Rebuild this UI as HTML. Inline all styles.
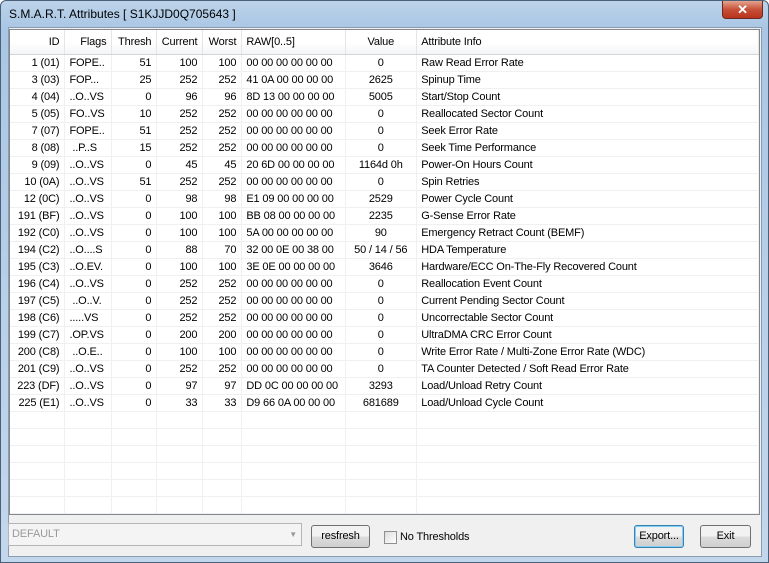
<!DOCTYPE html>
<html><head><meta charset="utf-8"><style>
*{margin:0;padding:0;box-sizing:border-box}
body{width:769px;height:563px;overflow:hidden;font-family:"Liberation Sans",sans-serif;font-size:11px;color:#000;background:#fff;letter-spacing:-0.15px}
#win{position:absolute;left:0;top:0;width:769px;height:563px;background:linear-gradient(180deg,#bcd3ea 0%,#a9c6e4 5%,#b7cfe8 50%,#c3d7ec 100%);border:1px solid #4a5f78;border-radius:6px 6px 0 0}
#title{position:absolute;left:8px;top:6px;font-size:12px;color:#000;font-family:"Liberation Sans",sans-serif;letter-spacing:0}
#close{position:absolute;left:721px;top:0;width:41px;height:18px;border:1px solid #6b2a20;border-top:none;border-radius:0 0 4px 4px;background:linear-gradient(#e5a48f,#c75038 50%,#b9331c);color:#fff;font-weight:bold;text-align:center;font-size:13px;line-height:17px}
#client{position:absolute;left:7px;top:26px;width:754px;height:530px;background:#f0f0f0;border:1px solid #8a9bb0}
#list{position:absolute;left:8px;top:28px;width:751px;height:486px;background:#fff;border:1px solid #828790;overflow:hidden}
table{border-collapse:collapse;table-layout:fixed;position:absolute;left:0;top:0}
td{height:17px;border-right:1px solid #f0f0f0;border-bottom:1px solid #f0f0f0;padding:0 5px 0 4px;white-space:nowrap;overflow:hidden;line-height:16px}
tr.h td{height:24px;background:linear-gradient(#fff 50%,#f4f5f7);border-right:1px solid #e5e5e5;border-bottom:1px solid #d5d5d5;padding-top:1px}
.r{text-align:right}.c{text-align:center}
.btn{position:absolute;height:23px;border:1px solid #707070;border-radius:3px;background:linear-gradient(#f2f2f2 50%,#dcdcdc 50%,#cfcfcf);text-align:center;line-height:21px}
</style></head><body>
<div id="win">
<div id="title">S.M.A.R.T. Attributes [ S1KJJD0Q705643 ]</div>
<div id="close">✕</div>
<div id="client"></div>
<div id="list"><table>
<colgroup><col style="width:55px"><col style="width:47px"><col style="width:45px"><col style="width:46px"><col style="width:39px"><col style="width:104px"><col style="width:71px"><col style="width:343px"></colgroup>
<tr class="h"><td class="r">ID</td><td class="r">Flags</td><td class="r">Thresh</td><td class="r">Current</td><td class="r">Worst</td><td>RAW[0..5]</td><td class="c">Value</td><td>Attribute Info</td></tr>
<tr><td class="r">1 (01)</td><td>FOPE..</td><td class="r">51</td><td class="r">100</td><td class="r">100</td><td>00 00 00 00 00 00</td><td class="c">0</td><td>Raw Read Error Rate</td></tr>
<tr><td class="r">3 (03)</td><td>FOP...</td><td class="r">25</td><td class="r">252</td><td class="r">252</td><td>41 0A 00 00 00 00</td><td class="c">2625</td><td>Spinup Time</td></tr>
<tr><td class="r">4 (04)</td><td>..O..VS</td><td class="r">0</td><td class="r">96</td><td class="r">96</td><td>8D 13 00 00 00 00</td><td class="c">5005</td><td>Start/Stop Count</td></tr>
<tr><td class="r">5 (05)</td><td>FO..VS</td><td class="r">10</td><td class="r">252</td><td class="r">252</td><td>00 00 00 00 00 00</td><td class="c">0</td><td>Reallocated Sector Count</td></tr>
<tr><td class="r">7 (07)</td><td>FOPE..</td><td class="r">51</td><td class="r">252</td><td class="r">252</td><td>00 00 00 00 00 00</td><td class="c">0</td><td>Seek Error Rate</td></tr>
<tr><td class="r">8 (08)</td><td>&nbsp;..P..S</td><td class="r">15</td><td class="r">252</td><td class="r">252</td><td>00 00 00 00 00 00</td><td class="c">0</td><td>Seek Time Performance</td></tr>
<tr><td class="r">9 (09)</td><td>..O..VS</td><td class="r">0</td><td class="r">45</td><td class="r">45</td><td>20 6D 00 00 00 00</td><td class="c">1164d 0h</td><td>Power-On Hours Count</td></tr>
<tr><td class="r">10 (0A)</td><td>..O..VS</td><td class="r">51</td><td class="r">252</td><td class="r">252</td><td>00 00 00 00 00 00</td><td class="c">0</td><td>Spin Retries</td></tr>
<tr><td class="r">12 (0C)</td><td>..O..VS</td><td class="r">0</td><td class="r">98</td><td class="r">98</td><td>E1 09 00 00 00 00</td><td class="c">2529</td><td>Power Cycle Count</td></tr>
<tr><td class="r">191 (BF)</td><td>..O..VS</td><td class="r">0</td><td class="r">100</td><td class="r">100</td><td>BB 08 00 00 00 00</td><td class="c">2235</td><td>G-Sense Error Rate</td></tr>
<tr><td class="r">192 (C0)</td><td>..O..VS</td><td class="r">0</td><td class="r">100</td><td class="r">100</td><td>5A 00 00 00 00 00</td><td class="c">90</td><td>Emergency Retract Count (BEMF)</td></tr>
<tr><td class="r">194 (C2)</td><td>..O....S</td><td class="r">0</td><td class="r">88</td><td class="r">70</td><td>32 00 0E 00 38 00</td><td class="c">50 / 14 / 56</td><td>HDA Temperature</td></tr>
<tr><td class="r">195 (C3)</td><td>..O.EV.</td><td class="r">0</td><td class="r">100</td><td class="r">100</td><td>3E 0E 00 00 00 00</td><td class="c">3646</td><td>Hardware/ECC On-The-Fly Recovered Count</td></tr>
<tr><td class="r">196 (C4)</td><td>..O..VS</td><td class="r">0</td><td class="r">252</td><td class="r">252</td><td>00 00 00 00 00 00</td><td class="c">0</td><td>Reallocation Event Count</td></tr>
<tr><td class="r">197 (C5)</td><td>&nbsp;..O..V.</td><td class="r">0</td><td class="r">252</td><td class="r">252</td><td>00 00 00 00 00 00</td><td class="c">0</td><td>Current Pending Sector Count</td></tr>
<tr><td class="r">198 (C6)</td><td>.....VS</td><td class="r">0</td><td class="r">252</td><td class="r">252</td><td>00 00 00 00 00 00</td><td class="c">0</td><td>Uncorrectable Sector Count</td></tr>
<tr><td class="r">199 (C7)</td><td>.OP.VS</td><td class="r">0</td><td class="r">200</td><td class="r">200</td><td>00 00 00 00 00 00</td><td class="c">0</td><td>UltraDMA CRC Error Count</td></tr>
<tr><td class="r">200 (C8)</td><td>&nbsp;..O.E..</td><td class="r">0</td><td class="r">100</td><td class="r">100</td><td>00 00 00 00 00 00</td><td class="c">0</td><td>Write Error Rate / Multi-Zone Error Rate (WDC)</td></tr>
<tr><td class="r">201 (C9)</td><td>..O..VS</td><td class="r">0</td><td class="r">252</td><td class="r">252</td><td>00 00 00 00 00 00</td><td class="c">0</td><td>TA Counter Detected / Soft Read Error Rate</td></tr>
<tr><td class="r">223 (DF)</td><td>..O..VS</td><td class="r">0</td><td class="r">97</td><td class="r">97</td><td>DD 0C 00 00 00 00</td><td class="c">3293</td><td>Load/Unload Retry Count</td></tr>
<tr><td class="r">225 (E1)</td><td>..O..VS</td><td class="r">0</td><td class="r">33</td><td class="r">33</td><td>D9 66 0A 00 00 00</td><td class="c">681689</td><td>Load/Unload Cycle Count</td></tr>
<tr><td></td><td></td><td></td><td></td><td></td><td></td><td></td><td></td></tr>
<tr><td></td><td></td><td></td><td></td><td></td><td></td><td></td><td></td></tr>
<tr><td></td><td></td><td></td><td></td><td></td><td></td><td></td><td></td></tr>
<tr><td></td><td></td><td></td><td></td><td></td><td></td><td></td><td></td></tr>
<tr><td></td><td></td><td></td><td></td><td></td><td></td><td></td><td></td></tr>
<tr><td></td><td></td><td></td><td></td><td></td><td></td><td></td><td></td></tr>
</table></div>
<div style="position:absolute;left:7px;top:522px;width:294px;height:23px;border:1px solid #b5b5b5;background:#f4f4f4;color:#9a9a9a;padding-left:3px;line-height:21px">DEFAULT<span style="position:absolute;right:4px;top:0;font-size:8px;color:#999">▼</span></div>
<div class="btn" style="left:310px;top:524px;width:59px">resfresh</div>
<div style="position:absolute;left:383px;top:530px;width:13px;height:13px;border:1px solid #8f8f8f;background:linear-gradient(135deg,#ddd,#fff)"></div>
<div style="position:absolute;left:399px;top:529px;line-height:14px">No Thresholds</div>
<div class="btn" style="left:633px;top:524px;width:50px;border-color:#3c7fb1;box-shadow:inset 0 0 0 1px #7fd0f5">Export...</div>
<div class="btn" style="left:699px;top:524px;width:51px">Exit</div>
</div>
</body></html>
